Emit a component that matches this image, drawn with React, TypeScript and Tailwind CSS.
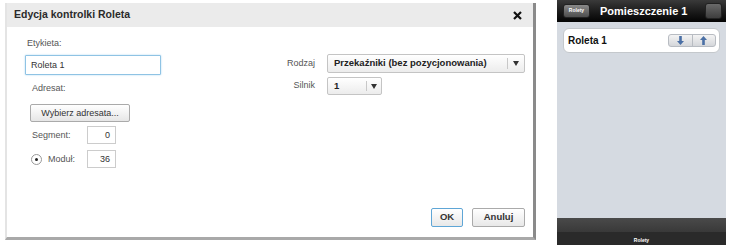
import React from "react";

const font = { fontFamily: '"Liberation Sans", Arial, sans-serif' };

function Select({ text, width, arrowW, h }: { text: string; width: string; arrowW: string; h: string }) {
  return (
    <div className={`flex ${h} ${width} shrink-0 items-stretch rounded-[2px] border border-[#c4c4c4] bg-gradient-to-b from-white to-[#ececec] text-[9.5px] font-bold text-[#222]`}>
      <div className="flex flex-1 items-center whitespace-nowrap pl-[6px]">{text}</div>
      <div className="my-[3px] w-px bg-[#c8c8c8]" />
      <div className={`flex ${arrowW} items-center justify-center`}>
        <svg width="6" height="5" viewBox="0 0 6 5"><path d="M0 0h6L3 5z" fill="#333" /></svg>
      </div>
    </div>
  );
}

export default function App() {
  return (
    <div className="flex h-[245px] w-[729px] bg-white" style={font}>
      {/* Dialog */}
      <div className="mt-[3px] ml-[5px] flex h-[237px] w-[531px] shrink-0 flex-col border-l-2 border-r-[3px] border-b-[3px] border-l-[#e4e4e4] border-r-[#8a8a8a] border-b-[#a9a9a9] bg-white">
        <div className="flex h-[24px] items-center justify-between bg-[#ebebeb] pl-[7px] pr-[11px]">
          <span className="text-[10.5px] font-bold text-[#2a2a2a]">Edycja kontrolki Roleta</span>
          <svg width="9" height="9" viewBox="0 0 9 9"><path d="M1 1l7 7M8 1l-7 7" stroke="#111" strokeWidth="2.2" /></svg>
        </div>
        <div className="relative flex flex-1">
          <div className="flex w-[260px] shrink-0 flex-col pl-[18px] pt-[10px] text-[9px] leading-[12px] text-[#555]">
            <div className="pl-[2px]">Etykieta:</div>
            <div className="mt-[6px] flex h-[20px] w-[136px] items-center rounded-[1px] border border-[#8fc3e4] bg-white pl-[5px] text-[#333] shadow-[0_0_2px_#a9d4f0]">
              Roleta 1
            </div>
            <div className="mt-[7px] pl-[7px]">Adresat:</div>
            <div className="mt-[10px] ml-[5px] flex h-[18px] w-[100px] items-center justify-center rounded-[2px] border border-[#aaa] bg-gradient-to-b from-white to-[#e6e6e6] text-[#333]">
              Wybierz adresata...
            </div>
            <div className="mt-[4px] flex items-center">
              <span className="w-[62px] pl-[7px]">Segment:</span>
              <div className="flex h-[18px] w-[29px] items-center justify-end border border-[#ccc] pr-[5px] text-[#333]">0</div>
            </div>
            <div className="mt-[6px] flex items-center">
              <div className="ml-[6px] flex h-[11px] w-[11px] items-center justify-center rounded-full border border-[#999] bg-white">
                <div className="h-[3px] w-[3px] rounded-full bg-[#222]" />
              </div>
              <span className="w-[45px] pl-[6px]">Moduł:</span>
              <div className="flex h-[18px] w-[29px] items-center justify-end border border-[#ccc] pr-[5px] text-[#333]">36</div>
            </div>
          </div>
          <div className="flex flex-col pt-[27px] text-[9px] text-[#555]">
            <div className="flex items-center">
              <span className="w-[60px] shrink-0 pr-[12px] text-right">Rodzaj</span>
              <Select text="Przekaźniki (bez pozycjonowania)" width="w-[198px]" arrowW="w-[16px]" h="h-[19px]" />
            </div>
            <div className="mt-[4px] flex items-center">
              <span className="w-[60px] shrink-0 pr-[12px] text-right">Silnik</span>
              <Select text="1" width="w-[55px]" arrowW="w-[14px]" h="h-[18px]" />
            </div>
          </div>
          <div className="absolute right-[8px] bottom-[10px] flex gap-[9px] text-[9.5px] font-bold text-[#333]">
            <div className="flex h-[19px] w-[32px] items-center justify-center rounded-[2px] border border-[#5fa6d6] bg-gradient-to-b from-white to-[#e8e8e8]">OK</div>
            <div className="flex h-[19px] w-[53px] items-center justify-center rounded-[2px] border border-[#aaa] bg-gradient-to-b from-white to-[#e8e8e8]">Anuluj</div>
          </div>
        </div>
      </div>

      {/* Phone */}
      <div className="ml-[21px] flex h-[245px] w-[169px] shrink-0 flex-col bg-[#d5dae1]">
        <div className="flex h-[22px] items-center bg-gradient-to-b from-[#3a3a3a] to-[#050505] pl-[6px] pr-[4px]">
          <div className="flex h-[14px] w-[27px] items-center justify-center rounded-[3px] border border-[#222] bg-gradient-to-b from-[#8a8a8a] to-[#4e4e4e] text-[5px] font-bold text-white">Rolety</div>
          <div className="ml-[10px] flex-1 text-[11px] font-bold text-white">Pomieszczenie 1</div>
          <div className="h-[16px] w-[17px] rounded-[3px] border border-[#222] bg-gradient-to-b from-[#6a6a6a] to-[#3e3e3e]" />
        </div>
        <div className="flex-1 px-[6px] pt-[6px]">
          <div className="flex h-[25px] items-center justify-between rounded-[6px] border border-[#c4c8cc] bg-white pl-[4px] pr-[3px]">
            <span className="text-[10px] font-bold text-[#111]">Roleta 1</span>
            <div className="flex h-[13px] w-[48px] rounded-[3px] border border-[#b8bcc2] bg-gradient-to-b from-[#f4f4f4] to-[#d4d6da]">
              <div className="flex flex-1 items-center justify-center border-r border-[#b8bcc2]">
                <svg width="7" height="9" viewBox="0 0 7 9"><path d="M2.2 0h2.6v5h2.2L3.5 9 0 5h2.2z" fill="#4a6fa5" /></svg>
              </div>
              <div className="flex flex-1 items-center justify-center">
                <svg width="7" height="9" viewBox="0 0 7 9"><path d="M2.2 9h2.6V4h2.2L3.5 0 0 4h2.2z" fill="#4a6fa5" /></svg>
              </div>
            </div>
          </div>
        </div>
        <div className="flex h-[27px] flex-col bg-[#2a2a2a]">
          <div className="h-[14px] bg-gradient-to-b from-[#4a4a4a] to-[#393939]" />
          <div className="flex flex-1 items-end justify-center pb-[1px] text-[5px] font-bold text-white">Rolety</div>
        </div>
      </div>
    </div>
  );
}
